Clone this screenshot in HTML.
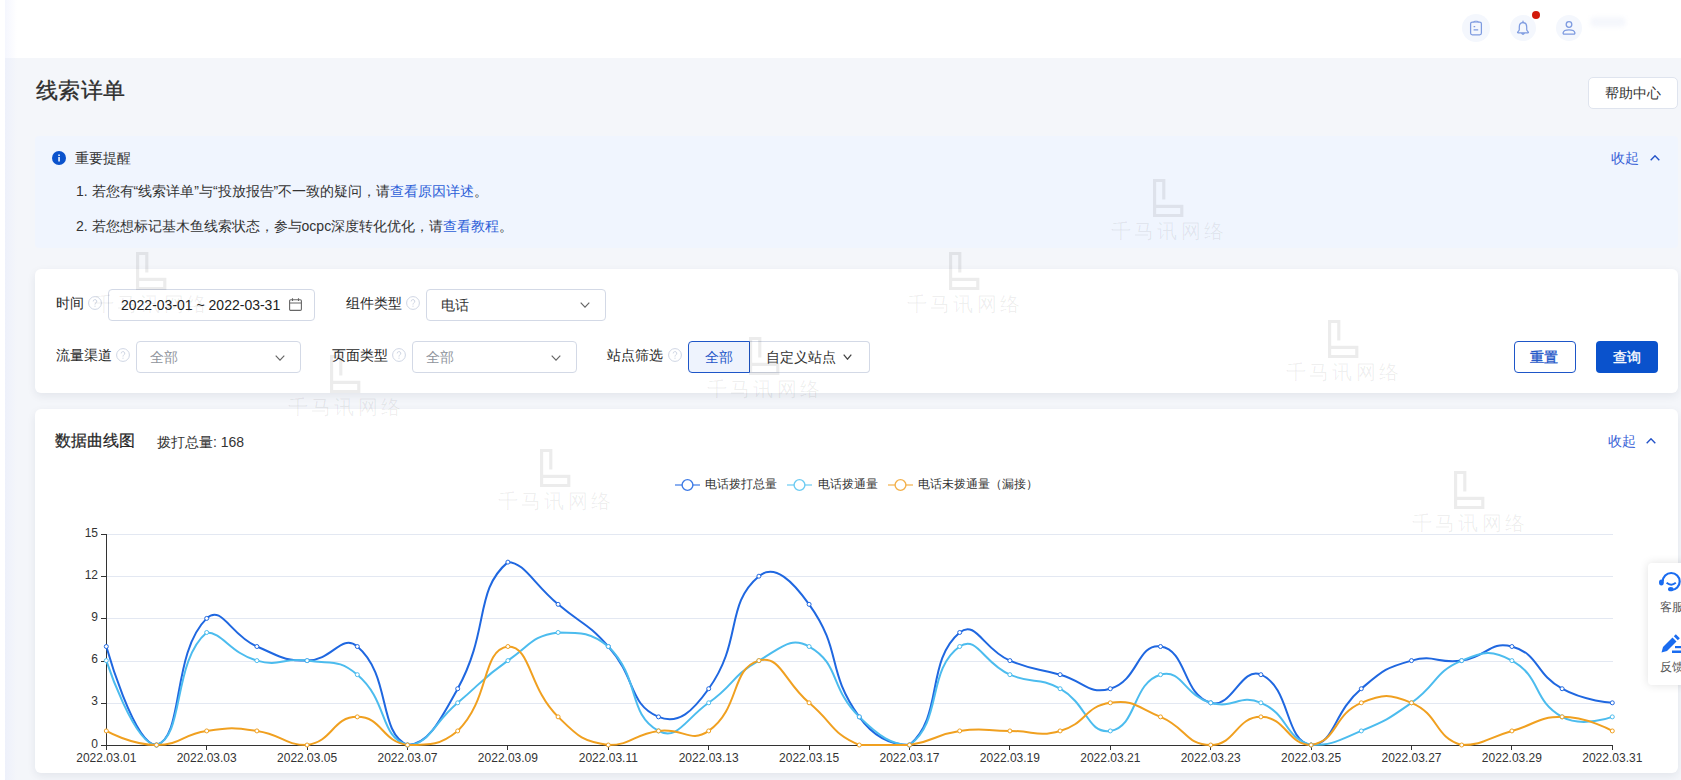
<!DOCTYPE html>
<html><head><meta charset="utf-8"><style>
html,body{margin:0;padding:0;width:1681px;height:780px;overflow:hidden;background:#fff;font-family:'Liberation Sans',sans-serif;}
.a{position:absolute;box-sizing:content-box}
.t{position:absolute;white-space:nowrap;font-family:'Liberation Sans',sans-serif;}
</style></head><body>
<div class="a" style="left:0px;top:0px;width:1681px;height:58px;background:#fff"></div><div class="a" style="left:5px;top:58px;width:1676px;height:722px;background:#f4f6fa"></div><div class="a" style="left:5px;top:0px;width:12px;height:780px;background:linear-gradient(90deg,rgba(225,230,252,0.35),rgba(240,243,252,0))"></div><div class="a" style="left:1462px;top:13.5px;width:28px;height:28px;background:#f4f7fd;border-radius:50%"></div><div class="a" style="left:1510px;top:14.5px;width:26px;height:26px;background:#f4f7fd;border-radius:50%"></div><div class="a" style="left:1556px;top:14.5px;width:26px;height:26px;background:#f4f7fd;border-radius:50%"></div><svg class="a" style="left:1468px;top:19px" width="16" height="18" viewBox="0 0 16 18"><rect x="2.6" y="3" width="10.8" height="12.8" rx="1.8" fill="none" stroke="#7e9be0" stroke-width="1.25"/><path d="M5.8 3.2Q5.8 2.2 6.8 2.2H9.2Q10.2 2.2 10.2 3.2" fill="#f4f7fd" stroke="#7e9be0" stroke-width="1.1"/><path d="M5.6 7.6h1.6M5.6 10.8h4.6" stroke="#7e9be0" stroke-width="1.2"/></svg><svg class="a" style="left:1515px;top:19px" width="16" height="18" viewBox="0 0 16 18"><path d="M8 3.6C5.6 3.6 4.3 5.5 4.3 7.9V10.6C4.3 11.6 3.4 12.3 2.8 12.9C2.4 13.3 2.6 13.8 3.1 13.8H12.9C13.4 13.8 13.6 13.3 13.2 12.9C12.6 12.3 11.7 11.6 11.7 10.6V7.9C11.7 5.5 10.4 3.6 8 3.6Z" fill="none" stroke="#7e9be0" stroke-width="1.25" stroke-linejoin="round"/><path d="M8 2V3.6" stroke="#7e9be0" stroke-width="1.25" stroke-linecap="round"/><path d="M6.4 14.6Q8 16.4 9.6 14.6Z" fill="#7e9be0" stroke="#7e9be0" stroke-width="0.8"/></svg><div class="a" style="left:1532px;top:11px;width:8px;height:8px;background:#d21a0a;border-radius:50%"></div><svg class="a" style="left:1561px;top:19px" width="16" height="18" viewBox="0 0 16 18"><circle cx="8" cy="5.5" r="2.8" fill="none" stroke="#7e9be0" stroke-width="1.3"/><path d="M3.2 15.2h9.6a1.2 1.2 0 0 0 1.1-1.4c-.4-1.8-2.7-2.9-5.9-2.9s-5.5 1.1-5.9 2.9a1.2 1.2 0 0 0 1.1 1.4z" fill="none" stroke="#7e9be0" stroke-width="1.3" stroke-linejoin="round"/></svg><div class="a" style="left:1590px;top:17px;width:36px;height:10px;background:#f5f7fc;border-radius:8px;filter:blur(2px)"></div><div class="t" style="left:36px;top:80px;font-size:22px;line-height:22px;color:#2e2e2e;-webkit-text-stroke:0.3px #2e2e2e;letter-spacing:0.4px">线索详单</div><div class="a" style="left:1588px;top:77px;width:88px;height:30px;background:#fff;border:1px solid #dfe4ee;border-radius:5px"></div><div class="t" style="left:1605px;top:86px;font-size:14px;line-height:14px;color:#333;">帮助中心</div><div class="a" style="left:35px;top:136px;width:1643px;height:112px;background:#f0f5fe;border-radius:4px"></div><div class="a" style="left:52px;top:151px;width:14px;height:14px;background:#0a52cc;border-radius:50%"></div><svg class="a" style="left:52px;top:151px" width="14" height="14" viewBox="0 0 14 14"><rect x="6.3" y="6" width="1.5" height="4.5" fill="#fff"/><rect x="6.3" y="3.5" width="1.5" height="1.5" fill="#fff"/></svg><div class="t" style="left:75px;top:151px;font-size:14px;line-height:14px;color:#333;">重要提醒</div><div class="t" style="left:1611px;top:151px;font-size:14px;line-height:14px;color:#3862d6;">收起</div><svg class="a" style="left:1650px;top:155px" width="10" height="6" viewBox="0 0 10 6"><path d="M0.7 5.3 L5.0 0.8 L9.3 5.3" fill="none" stroke="#2453c8" stroke-width="1.4"/></svg><div class="t" style="left:76px;top:184px;font-size:14px;line-height:14px;color:#333;">1. 若您有“线索详单”与“投放报告”不一致的疑问，请<span style="color:#2d5fd8">查看原因详述</span>。</div><div class="t" style="left:76px;top:219px;font-size:14px;line-height:14px;color:#333;">2. 若您想标记基木鱼线索状态，参与ocpc深度转化优化，请<span style="color:#2d5fd8">查看教程</span>。</div><div class="a" style="left:35px;top:269px;width:1643px;height:124px;background:#fff;border-radius:6px;box-shadow:0 3px 8px rgba(30,40,70,0.08)"></div><div class="t" style="left:56px;top:296px;font-size:14px;line-height:14px;color:#282828;">时间</div><svg class="a" style="left:88px;top:296px" width="14" height="14" viewBox="0 0 14 14"><circle cx="7" cy="7" r="6.4" fill="none" stroke="#cfd6e4" stroke-width="1"/><path d="M5.2 5.4a1.8 1.8 0 1 1 2.6 1.6c-.5.3-.8.6-.8 1.2v.4" fill="none" stroke="#cfd6e4" stroke-width="1"/><circle cx="7" cy="10.2" r=".6" fill="#cfd6e4"/></svg><div class="a" style="left:108px;top:289px;width:205px;height:30px;background:#fff;border:1px solid #d3d9e6;border-radius:4px"></div><div class="t" style="left:121px;top:298px;font-size:14px;line-height:14px;color:#222;">2022-03-01 ~ 2022-03-31</div><svg class="a" style="left:289px;top:298px" width="13" height="13" viewBox="0 0 13 13"><rect x="0.6" y="1.8" width="11.8" height="10.6" rx="1.2" fill="none" stroke="#666" stroke-width="1.1"/><path d="M0.6 5h11.8M3.5 0.3v2.8M9.5 0.3v2.8" stroke="#666" stroke-width="1.1"/></svg><div class="t" style="left:346px;top:296px;font-size:14px;line-height:14px;color:#282828;">组件类型</div><svg class="a" style="left:406px;top:296px" width="14" height="14" viewBox="0 0 14 14"><circle cx="7" cy="7" r="6.4" fill="none" stroke="#cfd6e4" stroke-width="1"/><path d="M5.2 5.4a1.8 1.8 0 1 1 2.6 1.6c-.5.3-.8.6-.8 1.2v.4" fill="none" stroke="#cfd6e4" stroke-width="1"/><circle cx="7" cy="10.2" r=".6" fill="#cfd6e4"/></svg><div class="a" style="left:426px;top:289px;width:178px;height:30px;background:#fff;border:1px solid #d3d9e6;border-radius:4px"></div><div class="t" style="left:441px;top:298px;font-size:14px;line-height:14px;color:#333;">电话</div><svg class="a" style="left:580px;top:302px" width="10" height="6" viewBox="0 0 10 6"><path d="M0.7 0.7 L5.0 5.2 L9.3 0.7" fill="none" stroke="#666" stroke-width="1.15"/></svg><div class="t" style="left:56px;top:348px;font-size:14px;line-height:14px;color:#282828;">流量渠道</div><svg class="a" style="left:116px;top:348px" width="14" height="14" viewBox="0 0 14 14"><circle cx="7" cy="7" r="6.4" fill="none" stroke="#cfd6e4" stroke-width="1"/><path d="M5.2 5.4a1.8 1.8 0 1 1 2.6 1.6c-.5.3-.8.6-.8 1.2v.4" fill="none" stroke="#cfd6e4" stroke-width="1"/><circle cx="7" cy="10.2" r=".6" fill="#cfd6e4"/></svg><div class="a" style="left:136px;top:341px;width:163px;height:30px;background:#fff;border:1px solid #d3d9e6;border-radius:4px"></div><div class="t" style="left:150px;top:350px;font-size:14px;line-height:14px;color:#8f949c;">全部</div><svg class="a" style="left:275px;top:355px" width="10" height="6" viewBox="0 0 10 6"><path d="M0.7 0.7 L5.0 5.2 L9.3 0.7" fill="none" stroke="#666" stroke-width="1.15"/></svg><div class="t" style="left:332px;top:348px;font-size:14px;line-height:14px;color:#282828;">页面类型</div><svg class="a" style="left:392px;top:348px" width="14" height="14" viewBox="0 0 14 14"><circle cx="7" cy="7" r="6.4" fill="none" stroke="#cfd6e4" stroke-width="1"/><path d="M5.2 5.4a1.8 1.8 0 1 1 2.6 1.6c-.5.3-.8.6-.8 1.2v.4" fill="none" stroke="#cfd6e4" stroke-width="1"/><circle cx="7" cy="10.2" r=".6" fill="#cfd6e4"/></svg><div class="a" style="left:412px;top:341px;width:163px;height:30px;background:#fff;border:1px solid #d3d9e6;border-radius:4px"></div><div class="t" style="left:426px;top:350px;font-size:14px;line-height:14px;color:#8f949c;">全部</div><svg class="a" style="left:551px;top:355px" width="10" height="6" viewBox="0 0 10 6"><path d="M0.7 0.7 L5.0 5.2 L9.3 0.7" fill="none" stroke="#666" stroke-width="1.15"/></svg><div class="t" style="left:607px;top:348px;font-size:14px;line-height:14px;color:#282828;">站点筛选</div><svg class="a" style="left:668px;top:348px" width="14" height="14" viewBox="0 0 14 14"><circle cx="7" cy="7" r="6.4" fill="none" stroke="#cfd6e4" stroke-width="1"/><path d="M5.2 5.4a1.8 1.8 0 1 1 2.6 1.6c-.5.3-.8.6-.8 1.2v.4" fill="none" stroke="#cfd6e4" stroke-width="1"/><circle cx="7" cy="10.2" r=".6" fill="#cfd6e4"/></svg><div class="a" style="left:750px;top:341px;width:119px;height:30px;background:#fff;border:1px solid #d3d9e6;border-left:none;border-radius:0 4px 4px 0"></div><div class="a" style="left:688px;top:341px;width:60px;height:30px;background:#eef3fd;border:1px solid #1e56c8;border-radius:4px 0 0 4px"></div><div class="t" style="left:705px;top:350px;font-size:14px;line-height:14px;color:#1e56c8;">全部</div><div class="t" style="left:766px;top:350px;font-size:14px;line-height:14px;color:#333;">自定义站点</div><svg class="a" style="left:843px;top:354px" width="9" height="6" viewBox="0 0 9 6"><path d="M0.7 0.7 L4.5 5.2 L8.3 0.7" fill="none" stroke="#444" stroke-width="1.25"/></svg><div class="a" style="left:1514px;top:341px;width:60px;height:30px;background:#fff;border:1px solid #1e56c8;border-radius:4px"></div><div class="t" style="left:1530px;top:350px;font-size:14px;line-height:14px;color:#1e56c8;-webkit-text-stroke:0.35px #1e56c8">重置</div><div class="a" style="left:1596px;top:341px;width:62px;height:32px;background:#0a52cc;border-radius:4px"></div><div class="t" style="left:1613px;top:350px;font-size:14px;line-height:14px;color:#fff;-webkit-text-stroke:0.35px #fff">查询</div><div class="a" style="left:35px;top:409px;width:1643px;height:364px;background:#fff;border-radius:6px;box-shadow:0 3px 8px rgba(30,40,70,0.08)"></div><div class="t" style="left:55px;top:433px;font-size:16px;line-height:16px;color:#282828;-webkit-text-stroke:0.25px #282828">数据曲线图</div><div class="t" style="left:157px;top:435px;font-size:14px;line-height:14px;color:#333;">拨打总量: 168</div><div class="t" style="left:1608px;top:434px;font-size:14px;line-height:14px;color:#3862d6;">收起</div><svg class="a" style="left:1646px;top:438px" width="10" height="6" viewBox="0 0 10 6"><path d="M0.7 5.3 L5.0 0.8 L9.3 5.3" fill="none" stroke="#2453c8" stroke-width="1.4"/></svg><svg class="a" style="left:675px;top:478px" width="25" height="14" viewBox="0 0 25 14"><path d="M0 7H7.5M17.5 7H25" stroke="#3d7ae6" stroke-width="1.5" stroke-opacity="0.8"/><circle cx="12.5" cy="7" r="5.4" fill="#fff" stroke="#3d7ae6" stroke-width="1.4"/></svg><div class="t" style="left:705px;top:478px;font-size:12px;line-height:12px;color:#333;">电话拨打总量</div><svg class="a" style="left:787px;top:478px" width="25" height="14" viewBox="0 0 25 14"><path d="M0 7H7.5M17.5 7H25" stroke="#6ccbf2" stroke-width="1.5" stroke-opacity="0.8"/><circle cx="12.5" cy="7" r="5.4" fill="#fff" stroke="#6ccbf2" stroke-width="1.4"/></svg><div class="t" style="left:818px;top:478px;font-size:12px;line-height:12px;color:#333;">电话拨通量</div><svg class="a" style="left:888px;top:478px" width="25" height="14" viewBox="0 0 25 14"><path d="M0 7H7.5M17.5 7H25" stroke="#f3b04a" stroke-width="1.5" stroke-opacity="0.8"/><circle cx="12.5" cy="7" r="5.4" fill="#fff" stroke="#f3b04a" stroke-width="1.4"/></svg><div class="t" style="left:918px;top:478px;font-size:12px;line-height:12px;color:#333;">电话未拨通量（漏接）</div><svg width="1681" height="780" style="position:absolute;left:0;top:0">
<line x1="106" y1="703.5" x2="1613" y2="703.5" stroke="#e3e8f2" stroke-width="1"/>
<line x1="106" y1="661.5" x2="1613" y2="661.5" stroke="#e3e8f2" stroke-width="1"/>
<line x1="106" y1="618.5" x2="1613" y2="618.5" stroke="#e3e8f2" stroke-width="1"/>
<line x1="106" y1="576.5" x2="1613" y2="576.5" stroke="#e3e8f2" stroke-width="1"/>
<line x1="106" y1="534.5" x2="1613" y2="534.5" stroke="#e3e8f2" stroke-width="1"/>
<line x1="106.5" y1="534" x2="106.5" y2="746" stroke="#333" stroke-width="1"/>
<line x1="101" y1="745.5" x2="106" y2="745.5" stroke="#333" stroke-width="1"/>
<line x1="101" y1="703.5" x2="106" y2="703.5" stroke="#333" stroke-width="1"/>
<line x1="101" y1="661.5" x2="106" y2="661.5" stroke="#333" stroke-width="1"/>
<line x1="101" y1="618.5" x2="106" y2="618.5" stroke="#333" stroke-width="1"/>
<line x1="101" y1="576.5" x2="106" y2="576.5" stroke="#333" stroke-width="1"/>
<line x1="101" y1="534.5" x2="106" y2="534.5" stroke="#333" stroke-width="1"/>
<line x1="106" y1="745.5" x2="1613" y2="745.5" stroke="#333" stroke-width="1"/>
<line x1="106.5" y1="745" x2="106.5" y2="750" stroke="#333" stroke-width="1"/>
<line x1="206.5" y1="745" x2="206.5" y2="750" stroke="#333" stroke-width="1"/>
<line x1="307.5" y1="745" x2="307.5" y2="750" stroke="#333" stroke-width="1"/>
<line x1="407.5" y1="745" x2="407.5" y2="750" stroke="#333" stroke-width="1"/>
<line x1="507.5" y1="745" x2="507.5" y2="750" stroke="#333" stroke-width="1"/>
<line x1="608.5" y1="745" x2="608.5" y2="750" stroke="#333" stroke-width="1"/>
<line x1="708.5" y1="745" x2="708.5" y2="750" stroke="#333" stroke-width="1"/>
<line x1="809.5" y1="745" x2="809.5" y2="750" stroke="#333" stroke-width="1"/>
<line x1="909.5" y1="745" x2="909.5" y2="750" stroke="#333" stroke-width="1"/>
<line x1="1009.5" y1="745" x2="1009.5" y2="750" stroke="#333" stroke-width="1"/>
<line x1="1110.5" y1="745" x2="1110.5" y2="750" stroke="#333" stroke-width="1"/>
<line x1="1210.5" y1="745" x2="1210.5" y2="750" stroke="#333" stroke-width="1"/>
<line x1="1311.5" y1="745" x2="1311.5" y2="750" stroke="#333" stroke-width="1"/>
<line x1="1411.5" y1="745" x2="1411.5" y2="750" stroke="#333" stroke-width="1"/>
<line x1="1511.5" y1="745" x2="1511.5" y2="750" stroke="#333" stroke-width="1"/>
<line x1="1612.5" y1="745" x2="1612.5" y2="750" stroke="#333" stroke-width="1"/>
<path d="M106.30 646.53 C106.30 646.53 134.01 745.00 156.50 745.00 C184.21 737.24 171.41 653.01 206.70 618.40 C221.61 603.78 230.56 635.46 256.90 646.53 C280.76 656.56 282.00 660.60 307.10 660.60 C332.20 660.60 341.21 633.01 357.30 646.53 C391.41 675.21 377.66 732.46 407.50 745.00 C427.86 745.00 439.81 721.32 457.70 688.73 C490.01 629.88 474.02 590.62 507.90 562.13 C524.22 562.13 533.00 583.23 558.10 604.33 C583.20 625.43 586.64 622.26 608.30 646.53 C636.84 678.52 628.37 704.20 658.50 716.87 C678.57 725.30 692.72 711.12 708.70 688.73 C742.92 640.79 724.68 604.97 758.90 576.20 C774.88 562.77 793.12 581.94 809.10 604.33 C843.32 652.28 825.08 668.92 859.30 716.87 C875.28 739.26 893.52 745.00 909.50 745.00 C943.72 716.23 925.48 661.23 959.70 632.47 C975.68 619.03 983.56 649.53 1009.90 660.60 C1033.76 670.63 1035.00 667.63 1060.10 674.67 C1085.20 681.70 1088.07 694.96 1110.30 688.73 C1138.27 680.90 1137.15 643.26 1160.50 646.53 C1187.35 650.30 1182.23 694.82 1210.70 702.80 C1232.43 708.89 1240.83 666.23 1260.90 674.67 C1291.03 687.33 1284.29 741.24 1311.10 745.00 C1334.49 745.00 1332.83 712.67 1361.30 688.73 C1383.03 670.47 1384.69 668.11 1411.50 660.60 C1434.89 654.05 1437.07 664.05 1461.70 660.60 C1487.27 657.02 1489.67 640.30 1511.90 646.53 C1539.87 654.37 1534.13 673.06 1562.10 688.73 C1584.33 701.19 1612.30 702.80 1612.30 702.80" fill="none" stroke="#1f67e0" stroke-width="2" stroke-linejoin="bevel"/>
<path d="M106.30 660.60 C106.30 660.60 134.24 745.00 156.50 745.00 C184.44 737.17 172.48 661.23 206.70 632.47 C222.68 632.47 230.09 653.09 256.90 660.60 C280.29 667.15 282.47 657.15 307.10 660.60 C332.67 664.18 338.41 658.79 357.30 674.67 C388.61 700.99 378.96 737.00 407.50 745.00 C429.16 745.00 432.60 723.90 457.70 702.80 C482.80 681.70 481.16 679.33 507.90 660.60 C531.36 644.16 531.76 636.16 558.10 632.47 C581.96 632.47 590.89 632.47 608.30 646.53 C641.09 678.69 626.85 713.19 658.50 730.93 C677.05 741.33 685.24 719.24 708.70 702.80 C735.44 684.07 730.93 676.27 758.90 660.60 C781.13 648.14 790.21 635.95 809.10 646.53 C840.41 664.08 829.17 687.31 859.30 716.87 C879.37 736.55 892.31 745.00 909.50 745.00 C942.51 721.87 926.69 669.66 959.70 646.53 C976.89 634.49 983.56 663.60 1009.90 674.67 C1033.76 684.70 1037.87 676.27 1060.10 688.73 C1088.07 704.41 1086.95 734.20 1110.30 730.93 C1137.15 727.17 1132.03 682.64 1160.50 674.67 C1182.23 668.58 1183.89 695.29 1210.70 702.80 C1234.09 709.35 1239.13 693.65 1260.90 702.80 C1289.33 714.75 1283.13 737.16 1311.10 745.00 C1333.33 745.00 1337.44 740.96 1361.30 730.93 C1387.64 719.86 1388.04 719.24 1411.50 702.80 C1438.24 684.07 1433.27 672.55 1461.70 660.60 C1483.47 651.45 1491.84 649.36 1511.90 660.60 C1542.04 677.49 1531.96 699.98 1562.10 716.87 C1582.16 728.11 1612.30 716.87 1612.30 716.87" fill="none" stroke="#4cbcee" stroke-width="2" stroke-linejoin="bevel"/>
<path d="M106.30 730.93 C106.30 730.93 131.40 745.00 156.50 745.00 C181.60 745.00 181.13 734.52 206.70 730.93 C231.33 727.48 232.27 727.48 256.90 730.93 C282.47 734.52 283.24 745.00 307.10 745.00 C333.44 741.31 332.20 716.87 357.30 716.87 C382.40 716.87 381.16 741.31 407.50 745.00 C431.36 745.00 440.29 745.00 457.70 730.93 C490.49 698.77 481.20 650.27 507.90 646.53 C531.40 646.53 527.97 687.31 558.10 716.87 C578.17 736.55 581.96 741.31 608.30 745.00 C632.16 745.00 632.93 734.52 658.50 730.93 C683.13 727.48 690.25 743.86 708.70 730.93 C740.45 708.69 730.36 668.60 758.90 660.60 C780.56 654.53 784.00 681.70 809.10 702.80 C834.20 723.90 830.87 733.05 859.30 745.00 C881.07 745.00 884.87 745.00 909.50 745.00 C935.07 741.42 934.13 734.52 959.70 730.93 C984.33 727.48 984.80 730.93 1009.90 730.93 C1035.00 730.93 1036.71 737.49 1060.10 730.93 C1086.91 723.42 1083.96 706.49 1110.30 702.80 C1134.16 699.46 1136.64 706.84 1160.50 716.87 C1186.84 727.94 1185.60 745.00 1210.70 745.00 C1235.80 745.00 1235.80 716.87 1260.90 716.87 C1286.00 716.87 1287.64 745.00 1311.10 745.00 C1337.84 741.25 1332.87 714.75 1361.30 702.80 C1383.07 693.65 1389.73 693.65 1411.50 702.80 C1439.93 714.75 1433.73 737.16 1461.70 745.00 C1483.93 745.00 1486.80 737.97 1511.90 730.93 C1537.00 723.90 1537.00 716.87 1562.10 716.87 C1587.20 716.87 1612.30 730.93 1612.30 730.93" fill="none" stroke="#f0a020" stroke-width="2" stroke-linejoin="bevel"/>
<circle cx="106.30" cy="646.53" r="2" fill="#fff" stroke="#1f67e0" stroke-width="1"/><circle cx="156.50" cy="745.00" r="2" fill="#fff" stroke="#1f67e0" stroke-width="1"/><circle cx="206.70" cy="618.40" r="2" fill="#fff" stroke="#1f67e0" stroke-width="1"/><circle cx="256.90" cy="646.53" r="2" fill="#fff" stroke="#1f67e0" stroke-width="1"/><circle cx="307.10" cy="660.60" r="2" fill="#fff" stroke="#1f67e0" stroke-width="1"/><circle cx="357.30" cy="646.53" r="2" fill="#fff" stroke="#1f67e0" stroke-width="1"/><circle cx="407.50" cy="745.00" r="2" fill="#fff" stroke="#1f67e0" stroke-width="1"/><circle cx="457.70" cy="688.73" r="2" fill="#fff" stroke="#1f67e0" stroke-width="1"/><circle cx="507.90" cy="562.13" r="2" fill="#fff" stroke="#1f67e0" stroke-width="1"/><circle cx="558.10" cy="604.33" r="2" fill="#fff" stroke="#1f67e0" stroke-width="1"/><circle cx="608.30" cy="646.53" r="2" fill="#fff" stroke="#1f67e0" stroke-width="1"/><circle cx="658.50" cy="716.87" r="2" fill="#fff" stroke="#1f67e0" stroke-width="1"/><circle cx="708.70" cy="688.73" r="2" fill="#fff" stroke="#1f67e0" stroke-width="1"/><circle cx="758.90" cy="576.20" r="2" fill="#fff" stroke="#1f67e0" stroke-width="1"/><circle cx="809.10" cy="604.33" r="2" fill="#fff" stroke="#1f67e0" stroke-width="1"/><circle cx="859.30" cy="716.87" r="2" fill="#fff" stroke="#1f67e0" stroke-width="1"/><circle cx="909.50" cy="745.00" r="2" fill="#fff" stroke="#1f67e0" stroke-width="1"/><circle cx="959.70" cy="632.47" r="2" fill="#fff" stroke="#1f67e0" stroke-width="1"/><circle cx="1009.90" cy="660.60" r="2" fill="#fff" stroke="#1f67e0" stroke-width="1"/><circle cx="1060.10" cy="674.67" r="2" fill="#fff" stroke="#1f67e0" stroke-width="1"/><circle cx="1110.30" cy="688.73" r="2" fill="#fff" stroke="#1f67e0" stroke-width="1"/><circle cx="1160.50" cy="646.53" r="2" fill="#fff" stroke="#1f67e0" stroke-width="1"/><circle cx="1210.70" cy="702.80" r="2" fill="#fff" stroke="#1f67e0" stroke-width="1"/><circle cx="1260.90" cy="674.67" r="2" fill="#fff" stroke="#1f67e0" stroke-width="1"/><circle cx="1311.10" cy="745.00" r="2" fill="#fff" stroke="#1f67e0" stroke-width="1"/><circle cx="1361.30" cy="688.73" r="2" fill="#fff" stroke="#1f67e0" stroke-width="1"/><circle cx="1411.50" cy="660.60" r="2" fill="#fff" stroke="#1f67e0" stroke-width="1"/><circle cx="1461.70" cy="660.60" r="2" fill="#fff" stroke="#1f67e0" stroke-width="1"/><circle cx="1511.90" cy="646.53" r="2" fill="#fff" stroke="#1f67e0" stroke-width="1"/><circle cx="1562.10" cy="688.73" r="2" fill="#fff" stroke="#1f67e0" stroke-width="1"/><circle cx="1612.30" cy="702.80" r="2" fill="#fff" stroke="#1f67e0" stroke-width="1"/>
<circle cx="106.30" cy="660.60" r="2" fill="#fff" stroke="#4cbcee" stroke-width="1"/><circle cx="156.50" cy="745.00" r="2" fill="#fff" stroke="#4cbcee" stroke-width="1"/><circle cx="206.70" cy="632.47" r="2" fill="#fff" stroke="#4cbcee" stroke-width="1"/><circle cx="256.90" cy="660.60" r="2" fill="#fff" stroke="#4cbcee" stroke-width="1"/><circle cx="307.10" cy="660.60" r="2" fill="#fff" stroke="#4cbcee" stroke-width="1"/><circle cx="357.30" cy="674.67" r="2" fill="#fff" stroke="#4cbcee" stroke-width="1"/><circle cx="407.50" cy="745.00" r="2" fill="#fff" stroke="#4cbcee" stroke-width="1"/><circle cx="457.70" cy="702.80" r="2" fill="#fff" stroke="#4cbcee" stroke-width="1"/><circle cx="507.90" cy="660.60" r="2" fill="#fff" stroke="#4cbcee" stroke-width="1"/><circle cx="558.10" cy="632.47" r="2" fill="#fff" stroke="#4cbcee" stroke-width="1"/><circle cx="608.30" cy="646.53" r="2" fill="#fff" stroke="#4cbcee" stroke-width="1"/><circle cx="658.50" cy="730.93" r="2" fill="#fff" stroke="#4cbcee" stroke-width="1"/><circle cx="708.70" cy="702.80" r="2" fill="#fff" stroke="#4cbcee" stroke-width="1"/><circle cx="758.90" cy="660.60" r="2" fill="#fff" stroke="#4cbcee" stroke-width="1"/><circle cx="809.10" cy="646.53" r="2" fill="#fff" stroke="#4cbcee" stroke-width="1"/><circle cx="859.30" cy="716.87" r="2" fill="#fff" stroke="#4cbcee" stroke-width="1"/><circle cx="909.50" cy="745.00" r="2" fill="#fff" stroke="#4cbcee" stroke-width="1"/><circle cx="959.70" cy="646.53" r="2" fill="#fff" stroke="#4cbcee" stroke-width="1"/><circle cx="1009.90" cy="674.67" r="2" fill="#fff" stroke="#4cbcee" stroke-width="1"/><circle cx="1060.10" cy="688.73" r="2" fill="#fff" stroke="#4cbcee" stroke-width="1"/><circle cx="1110.30" cy="730.93" r="2" fill="#fff" stroke="#4cbcee" stroke-width="1"/><circle cx="1160.50" cy="674.67" r="2" fill="#fff" stroke="#4cbcee" stroke-width="1"/><circle cx="1210.70" cy="702.80" r="2" fill="#fff" stroke="#4cbcee" stroke-width="1"/><circle cx="1260.90" cy="702.80" r="2" fill="#fff" stroke="#4cbcee" stroke-width="1"/><circle cx="1311.10" cy="745.00" r="2" fill="#fff" stroke="#4cbcee" stroke-width="1"/><circle cx="1361.30" cy="730.93" r="2" fill="#fff" stroke="#4cbcee" stroke-width="1"/><circle cx="1411.50" cy="702.80" r="2" fill="#fff" stroke="#4cbcee" stroke-width="1"/><circle cx="1461.70" cy="660.60" r="2" fill="#fff" stroke="#4cbcee" stroke-width="1"/><circle cx="1511.90" cy="660.60" r="2" fill="#fff" stroke="#4cbcee" stroke-width="1"/><circle cx="1562.10" cy="716.87" r="2" fill="#fff" stroke="#4cbcee" stroke-width="1"/><circle cx="1612.30" cy="716.87" r="2" fill="#fff" stroke="#4cbcee" stroke-width="1"/>
<circle cx="106.30" cy="730.93" r="2" fill="#fff" stroke="#f0a020" stroke-width="1"/><circle cx="156.50" cy="745.00" r="2" fill="#fff" stroke="#f0a020" stroke-width="1"/><circle cx="206.70" cy="730.93" r="2" fill="#fff" stroke="#f0a020" stroke-width="1"/><circle cx="256.90" cy="730.93" r="2" fill="#fff" stroke="#f0a020" stroke-width="1"/><circle cx="307.10" cy="745.00" r="2" fill="#fff" stroke="#f0a020" stroke-width="1"/><circle cx="357.30" cy="716.87" r="2" fill="#fff" stroke="#f0a020" stroke-width="1"/><circle cx="407.50" cy="745.00" r="2" fill="#fff" stroke="#f0a020" stroke-width="1"/><circle cx="457.70" cy="730.93" r="2" fill="#fff" stroke="#f0a020" stroke-width="1"/><circle cx="507.90" cy="646.53" r="2" fill="#fff" stroke="#f0a020" stroke-width="1"/><circle cx="558.10" cy="716.87" r="2" fill="#fff" stroke="#f0a020" stroke-width="1"/><circle cx="608.30" cy="745.00" r="2" fill="#fff" stroke="#f0a020" stroke-width="1"/><circle cx="658.50" cy="730.93" r="2" fill="#fff" stroke="#f0a020" stroke-width="1"/><circle cx="708.70" cy="730.93" r="2" fill="#fff" stroke="#f0a020" stroke-width="1"/><circle cx="758.90" cy="660.60" r="2" fill="#fff" stroke="#f0a020" stroke-width="1"/><circle cx="809.10" cy="702.80" r="2" fill="#fff" stroke="#f0a020" stroke-width="1"/><circle cx="859.30" cy="745.00" r="2" fill="#fff" stroke="#f0a020" stroke-width="1"/><circle cx="909.50" cy="745.00" r="2" fill="#fff" stroke="#f0a020" stroke-width="1"/><circle cx="959.70" cy="730.93" r="2" fill="#fff" stroke="#f0a020" stroke-width="1"/><circle cx="1009.90" cy="730.93" r="2" fill="#fff" stroke="#f0a020" stroke-width="1"/><circle cx="1060.10" cy="730.93" r="2" fill="#fff" stroke="#f0a020" stroke-width="1"/><circle cx="1110.30" cy="702.80" r="2" fill="#fff" stroke="#f0a020" stroke-width="1"/><circle cx="1160.50" cy="716.87" r="2" fill="#fff" stroke="#f0a020" stroke-width="1"/><circle cx="1210.70" cy="745.00" r="2" fill="#fff" stroke="#f0a020" stroke-width="1"/><circle cx="1260.90" cy="716.87" r="2" fill="#fff" stroke="#f0a020" stroke-width="1"/><circle cx="1311.10" cy="745.00" r="2" fill="#fff" stroke="#f0a020" stroke-width="1"/><circle cx="1361.30" cy="702.80" r="2" fill="#fff" stroke="#f0a020" stroke-width="1"/><circle cx="1411.50" cy="702.80" r="2" fill="#fff" stroke="#f0a020" stroke-width="1"/><circle cx="1461.70" cy="745.00" r="2" fill="#fff" stroke="#f0a020" stroke-width="1"/><circle cx="1511.90" cy="730.93" r="2" fill="#fff" stroke="#f0a020" stroke-width="1"/><circle cx="1562.10" cy="716.87" r="2" fill="#fff" stroke="#f0a020" stroke-width="1"/><circle cx="1612.30" cy="730.93" r="2" fill="#fff" stroke="#f0a020" stroke-width="1"/>
<text x="98" y="747.5" text-anchor="end" font-size="12" fill="#333" font-family="Liberation Sans, sans-serif">0</text>
<text x="98" y="705.3" text-anchor="end" font-size="12" fill="#333" font-family="Liberation Sans, sans-serif">3</text>
<text x="98" y="663.1" text-anchor="end" font-size="12" fill="#333" font-family="Liberation Sans, sans-serif">6</text>
<text x="98" y="620.9" text-anchor="end" font-size="12" fill="#333" font-family="Liberation Sans, sans-serif">9</text>
<text x="98" y="578.7" text-anchor="end" font-size="12" fill="#333" font-family="Liberation Sans, sans-serif">12</text>
<text x="98" y="536.5" text-anchor="end" font-size="12" fill="#333" font-family="Liberation Sans, sans-serif">15</text>
<text x="106.3" y="762" text-anchor="middle" font-size="12" fill="#333" font-family="Liberation Sans, sans-serif">2022.03.01</text>
<text x="206.7" y="762" text-anchor="middle" font-size="12" fill="#333" font-family="Liberation Sans, sans-serif">2022.03.03</text>
<text x="307.1" y="762" text-anchor="middle" font-size="12" fill="#333" font-family="Liberation Sans, sans-serif">2022.03.05</text>
<text x="407.5" y="762" text-anchor="middle" font-size="12" fill="#333" font-family="Liberation Sans, sans-serif">2022.03.07</text>
<text x="507.9" y="762" text-anchor="middle" font-size="12" fill="#333" font-family="Liberation Sans, sans-serif">2022.03.09</text>
<text x="608.3" y="762" text-anchor="middle" font-size="12" fill="#333" font-family="Liberation Sans, sans-serif">2022.03.11</text>
<text x="708.7" y="762" text-anchor="middle" font-size="12" fill="#333" font-family="Liberation Sans, sans-serif">2022.03.13</text>
<text x="809.1" y="762" text-anchor="middle" font-size="12" fill="#333" font-family="Liberation Sans, sans-serif">2022.03.15</text>
<text x="909.5" y="762" text-anchor="middle" font-size="12" fill="#333" font-family="Liberation Sans, sans-serif">2022.03.17</text>
<text x="1009.9" y="762" text-anchor="middle" font-size="12" fill="#333" font-family="Liberation Sans, sans-serif">2022.03.19</text>
<text x="1110.3" y="762" text-anchor="middle" font-size="12" fill="#333" font-family="Liberation Sans, sans-serif">2022.03.21</text>
<text x="1210.7" y="762" text-anchor="middle" font-size="12" fill="#333" font-family="Liberation Sans, sans-serif">2022.03.23</text>
<text x="1311.1" y="762" text-anchor="middle" font-size="12" fill="#333" font-family="Liberation Sans, sans-serif">2022.03.25</text>
<text x="1411.5" y="762" text-anchor="middle" font-size="12" fill="#333" font-family="Liberation Sans, sans-serif">2022.03.27</text>
<text x="1511.9" y="762" text-anchor="middle" font-size="12" fill="#333" font-family="Liberation Sans, sans-serif">2022.03.29</text>
<text x="1612.3" y="762" text-anchor="middle" font-size="12" fill="#333" font-family="Liberation Sans, sans-serif">2022.03.31</text>
</svg><div class="a" style="left:1648px;top:563px;width:40px;height:122px;background:#fff;border-radius:4px 0 0 4px;box-shadow:0 0 10px rgba(0,0,0,0.12)"></div><svg class="a" style="left:1656px;top:569px" width="25" height="24" viewBox="0 0 25 24"><path d="M6.7 12.5A8.5 8.5 0 1 1 15.2 21" fill="none" stroke="#1a6cf0" stroke-width="2.2"/><ellipse cx="5.4" cy="13.6" rx="2.4" ry="3" fill="#1a6cf0"/><path d="M10.6 13.8Q15.2 17.6 19.8 13.8" fill="none" stroke="#1a6cf0" stroke-width="2"/><ellipse cx="14.8" cy="20.2" rx="2.8" ry="2.1" fill="#1a6cf0"/></svg><div class="t" style="left:1660px;top:601px;font-size:12px;line-height:12px;color:#555;">客服</div><svg class="a" style="left:1660px;top:633px" width="24" height="22" viewBox="0 0 24 22"><path d="M1.5 19.5l1.5-5.5 9.5-9.5 4 4-9.5 9.5z" fill="#1a6cf0"/><path d="M13.8 3.2l2-2 4 4-2 2z" fill="#1a6cf0"/><rect x="12" y="17.5" width="12" height="2.5" fill="#1a6cf0"/><rect x="15" y="13" width="9" height="2.2" fill="#1a6cf0"/></svg><div class="t" style="left:1660px;top:661px;font-size:12px;line-height:12px;color:#555;">反馈</div><svg class="a" style="left:1153px;top:179px" width="31" height="38" viewBox="0 0 31 38"><path fill="rgba(0,0,0,0.075)" fill-rule="evenodd" d="M0 0H12.4V20.5H9.2V3H3.2V25.8H30.4V38H0Z M3.2 29V35H27.2V29Z"/></svg><div class="t" style="left:1111px;top:220px;font-size:20px;line-height:22px;letter-spacing:3.2px;color:rgba(0,0,0,0.065)">千马讯网络</div><svg class="a" style="left:949px;top:252px" width="31" height="38" viewBox="0 0 31 38"><path fill="rgba(0,0,0,0.075)" fill-rule="evenodd" d="M0 0H12.4V20.5H9.2V3H3.2V25.8H30.4V38H0Z M3.2 29V35H27.2V29Z"/></svg><div class="t" style="left:907px;top:293px;font-size:20px;line-height:22px;letter-spacing:3.2px;color:rgba(0,0,0,0.065)">千马讯网络</div><svg class="a" style="left:749px;top:337px" width="31" height="38" viewBox="0 0 31 38"><path fill="rgba(0,0,0,0.075)" fill-rule="evenodd" d="M0 0H12.4V20.5H9.2V3H3.2V25.8H30.4V38H0Z M3.2 29V35H27.2V29Z"/></svg><div class="t" style="left:707px;top:378px;font-size:20px;line-height:22px;letter-spacing:3.2px;color:rgba(0,0,0,0.065)">千马讯网络</div><svg class="a" style="left:1328px;top:320px" width="31" height="38" viewBox="0 0 31 38"><path fill="rgba(0,0,0,0.075)" fill-rule="evenodd" d="M0 0H12.4V20.5H9.2V3H3.2V25.8H30.4V38H0Z M3.2 29V35H27.2V29Z"/></svg><div class="t" style="left:1286px;top:361px;font-size:20px;line-height:22px;letter-spacing:3.2px;color:rgba(0,0,0,0.065)">千马讯网络</div><svg class="a" style="left:330px;top:355px" width="31" height="38" viewBox="0 0 31 38"><path fill="rgba(0,0,0,0.075)" fill-rule="evenodd" d="M0 0H12.4V20.5H9.2V3H3.2V25.8H30.4V38H0Z M3.2 29V35H27.2V29Z"/></svg><div class="t" style="left:288px;top:396px;font-size:20px;line-height:22px;letter-spacing:3.2px;color:rgba(0,0,0,0.065)">千马讯网络</div><svg class="a" style="left:540px;top:449px" width="31" height="38" viewBox="0 0 31 38"><path fill="rgba(0,0,0,0.075)" fill-rule="evenodd" d="M0 0H12.4V20.5H9.2V3H3.2V25.8H30.4V38H0Z M3.2 29V35H27.2V29Z"/></svg><div class="t" style="left:498px;top:490px;font-size:20px;line-height:22px;letter-spacing:3.2px;color:rgba(0,0,0,0.065)">千马讯网络</div><svg class="a" style="left:1454px;top:471px" width="31" height="38" viewBox="0 0 31 38"><path fill="rgba(0,0,0,0.075)" fill-rule="evenodd" d="M0 0H12.4V20.5H9.2V3H3.2V25.8H30.4V38H0Z M3.2 29V35H27.2V29Z"/></svg><div class="t" style="left:1412px;top:512px;font-size:20px;line-height:22px;letter-spacing:3.2px;color:rgba(0,0,0,0.065)">千马讯网络</div><svg class="a" style="left:136px;top:252px" width="31" height="38" viewBox="0 0 31 38"><path fill="rgba(0,0,0,0.075)" fill-rule="evenodd" d="M0 0H12.4V20.5H9.2V3H3.2V25.8H30.4V38H0Z M3.2 29V35H27.2V29Z"/></svg><div class="t" style="left:94px;top:293px;font-size:20px;line-height:22px;letter-spacing:3.2px;color:rgba(0,0,0,0.065)">千马讯网络</div>
</body></html>
